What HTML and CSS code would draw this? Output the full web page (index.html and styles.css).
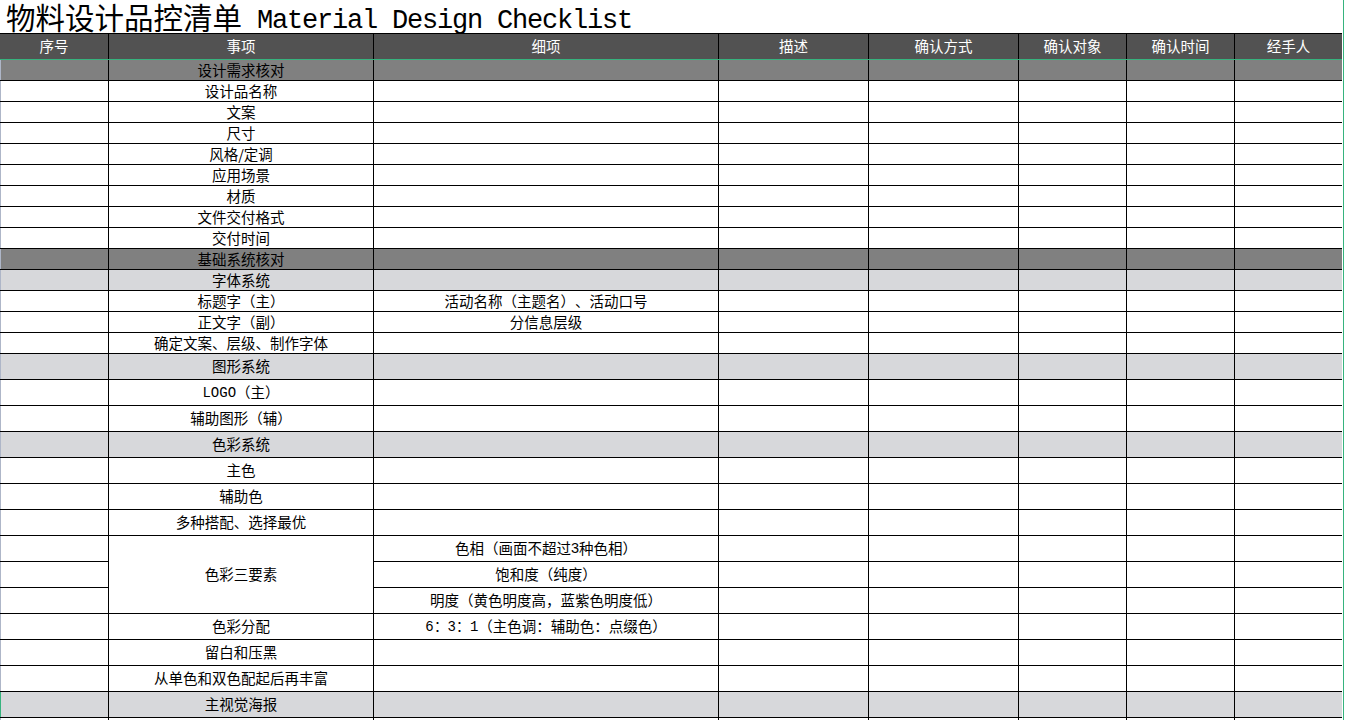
FILE: index.html
```html
<!DOCTYPE html>
<html lang="zh-CN">
<head>
<meta charset="utf-8">
<title>物料设计品控清单 Material Design Checklist</title>
<link rel="stylesheet" href="styles.css">
</head>
<body>
<div class="page">
  <div class="title"><span class="t-cn">物料设计品控清单</span><span class="t-en"> Material Design Checklist</span></div>

  <div class="head">
    <div class="cell">序号</div>
    <div class="cell">事项</div>
    <div class="cell">细项</div>
    <div class="cell">描述</div>
    <div class="cell">确认方式</div>
    <div class="cell">确认对象</div>
    <div class="cell">确认时间</div>
    <div class="cell">经手人</div>
  </div>

  <div class="body">
    <!-- section 1 -->
    <div class="cell c1 sec"></div><div class="cell sec">设计需求核对</div><div class="cell sec"></div><div class="cell sec"></div><div class="cell sec"></div><div class="cell sec"></div><div class="cell sec"></div><div class="cell sec"></div>
    <div class="cell c1"></div><div class="cell">设计品名称</div><div class="cell"></div><div class="cell"></div><div class="cell"></div><div class="cell"></div><div class="cell"></div><div class="cell"></div>
    <div class="cell c1"></div><div class="cell">文案</div><div class="cell"></div><div class="cell"></div><div class="cell"></div><div class="cell"></div><div class="cell"></div><div class="cell"></div>
    <div class="cell c1"></div><div class="cell">尺寸</div><div class="cell"></div><div class="cell"></div><div class="cell"></div><div class="cell"></div><div class="cell"></div><div class="cell"></div>
    <div class="cell c1"></div><div class="cell">风格/定调</div><div class="cell"></div><div class="cell"></div><div class="cell"></div><div class="cell"></div><div class="cell"></div><div class="cell"></div>
    <div class="cell c1"></div><div class="cell">应用场景</div><div class="cell"></div><div class="cell"></div><div class="cell"></div><div class="cell"></div><div class="cell"></div><div class="cell"></div>
    <div class="cell c1"></div><div class="cell">材质</div><div class="cell"></div><div class="cell"></div><div class="cell"></div><div class="cell"></div><div class="cell"></div><div class="cell"></div>
    <div class="cell c1"></div><div class="cell">文件交付格式</div><div class="cell"></div><div class="cell"></div><div class="cell"></div><div class="cell"></div><div class="cell"></div><div class="cell"></div>
    <div class="cell c1"></div><div class="cell">交付时间</div><div class="cell"></div><div class="cell"></div><div class="cell"></div><div class="cell"></div><div class="cell"></div><div class="cell"></div>
    <!-- section 2 -->
    <div class="cell c1 sec"></div><div class="cell sec">基础系统核对</div><div class="cell sec"></div><div class="cell sec"></div><div class="cell sec"></div><div class="cell sec"></div><div class="cell sec"></div><div class="cell sec"></div>
    <div class="cell c1 sub"></div><div class="cell sub">字体系统</div><div class="cell sub"></div><div class="cell sub"></div><div class="cell sub"></div><div class="cell sub"></div><div class="cell sub"></div><div class="cell sub"></div>
    <div class="cell c1"></div><div class="cell">标题字（主）</div><div class="cell">活动名称（主题名）、活动口号</div><div class="cell"></div><div class="cell"></div><div class="cell"></div><div class="cell"></div><div class="cell"></div>
    <div class="cell c1"></div><div class="cell">正文字（副）</div><div class="cell">分信息层级</div><div class="cell"></div><div class="cell"></div><div class="cell"></div><div class="cell"></div><div class="cell"></div>
    <div class="cell c1"></div><div class="cell">确定文案、层级、制作字体</div><div class="cell"></div><div class="cell"></div><div class="cell"></div><div class="cell"></div><div class="cell"></div><div class="cell"></div>
    <div class="cell c1 sub"></div><div class="cell sub">图形系统</div><div class="cell sub"></div><div class="cell sub"></div><div class="cell sub"></div><div class="cell sub"></div><div class="cell sub"></div><div class="cell sub"></div>
    <div class="cell c1"></div><div class="cell"><span class="mono">LOGO</span>（主）</div><div class="cell"></div><div class="cell"></div><div class="cell"></div><div class="cell"></div><div class="cell"></div><div class="cell"></div>
    <div class="cell c1"></div><div class="cell">辅助图形（辅）</div><div class="cell"></div><div class="cell"></div><div class="cell"></div><div class="cell"></div><div class="cell"></div><div class="cell"></div>
    <div class="cell c1 sub"></div><div class="cell sub">色彩系统</div><div class="cell sub"></div><div class="cell sub"></div><div class="cell sub"></div><div class="cell sub"></div><div class="cell sub"></div><div class="cell sub"></div>
    <div class="cell c1"></div><div class="cell">主色</div><div class="cell"></div><div class="cell"></div><div class="cell"></div><div class="cell"></div><div class="cell"></div><div class="cell"></div>
    <div class="cell c1"></div><div class="cell">辅助色</div><div class="cell"></div><div class="cell"></div><div class="cell"></div><div class="cell"></div><div class="cell"></div><div class="cell"></div>
    <div class="cell c1"></div><div class="cell">多种搭配、选择最优</div><div class="cell"></div><div class="cell"></div><div class="cell"></div><div class="cell"></div><div class="cell"></div><div class="cell"></div>
    <div class="cell c1"></div><div class="cell span3">色彩三要素</div><div class="cell">色相（画面不超过<span class="num">3</span>种色相）</div><div class="cell"></div><div class="cell"></div><div class="cell"></div><div class="cell"></div><div class="cell"></div>
    <div class="cell c1"></div><div class="cell">饱和度（纯度）</div><div class="cell"></div><div class="cell"></div><div class="cell"></div><div class="cell"></div><div class="cell"></div>
    <div class="cell c1"></div><div class="cell">明度（黄色明度高，蓝紫色明度低）</div><div class="cell"></div><div class="cell"></div><div class="cell"></div><div class="cell"></div><div class="cell"></div>
    <div class="cell c1"></div><div class="cell">色彩分配</div><div class="cell"><span class="mono">6：3：1</span>（主色调：辅助色：点缀色）</div><div class="cell"></div><div class="cell"></div><div class="cell"></div><div class="cell"></div><div class="cell"></div>
    <div class="cell c1"></div><div class="cell">留白和压黑</div><div class="cell"></div><div class="cell"></div><div class="cell"></div><div class="cell"></div><div class="cell"></div><div class="cell"></div>
    <div class="cell c1"></div><div class="cell">从单色和双色配起后再丰富</div><div class="cell"></div><div class="cell"></div><div class="cell"></div><div class="cell"></div><div class="cell"></div><div class="cell"></div>
    <div class="cell c1 sub sel"></div><div class="cell sub">主视觉海报</div><div class="cell sub"></div><div class="cell sub"></div><div class="cell sub"></div><div class="cell sub"></div><div class="cell sub"></div><div class="cell sub"></div>
    <div class="cell c1"></div><div class="cell"></div><div class="cell"></div><div class="cell"></div><div class="cell"></div><div class="cell"></div><div class="cell"></div><div class="cell"></div>
  </div>
</div>
</body>
</html>
```

FILE: styles.css
```css
html, body {
  margin: 0;
  padding: 0;
  background: #fff;
}

body {
  font-family: "Noto Sans CJK SC", sans-serif;
  color: #000;
  overflow: hidden;
  height: 720px;
  text-spacing-trim: space-all;
}

.page {
  width: 1343px;
  border-right: 1px solid #36b37e;
  min-height: 720px;
  box-sizing: content-box;
}

.title {
  height: 33px;
  line-height: 33px;
  padding-left: 6px;
  white-space: nowrap;
}

.t-cn {
  font-family: "Noto Sans CJK SC", sans-serif;
  font-size: 29.5px;
}

.t-en {
  font-family: "Liberation Mono", "DejaVu Sans Mono", monospace;
  font-size: 27px;
  letter-spacing: -1.2px;
  position: relative;
  top: -1px;
}

.head,
.body {
  display: grid;
  grid-template-columns: 108px 264px 344px 149px 149px 107px 107px 107px;
  column-gap: 1px;
  background: #000;
  width: 1342px;
}

.head {
  border-top: 1px solid #000;
  grid-template-rows: 25px;
  border-bottom: 1px solid #36b37e;
}

.body {
  row-gap: 1px;
  grid-template-rows: repeat(14, 20px) repeat(15, 25px);
}

.cell {
  display: flex;
  align-items: center;
  justify-content: center;
  font-size: 14.5px;
  line-height: 1;
  white-space: nowrap;
  background: #fff;
  overflow: hidden;
}

.head .cell {
  background: #525252;
  color: #fff;
}

.body .sec {
  background: #808080;
}

.body .sub {
  background: #d7d8db;
}

.c1 {
  box-shadow: inset 1px 0 0 #aeb6c8;
}

.c1.sel {
  box-shadow: inset 1px 0 0 #36b37e;
}

.span3 {
  grid-row: span 3;
}

.mono {
  font-family: "Liberation Mono", monospace;
  font-size: 14px;
}

.num {
  font-family: "Liberation Sans", sans-serif;
}
```
